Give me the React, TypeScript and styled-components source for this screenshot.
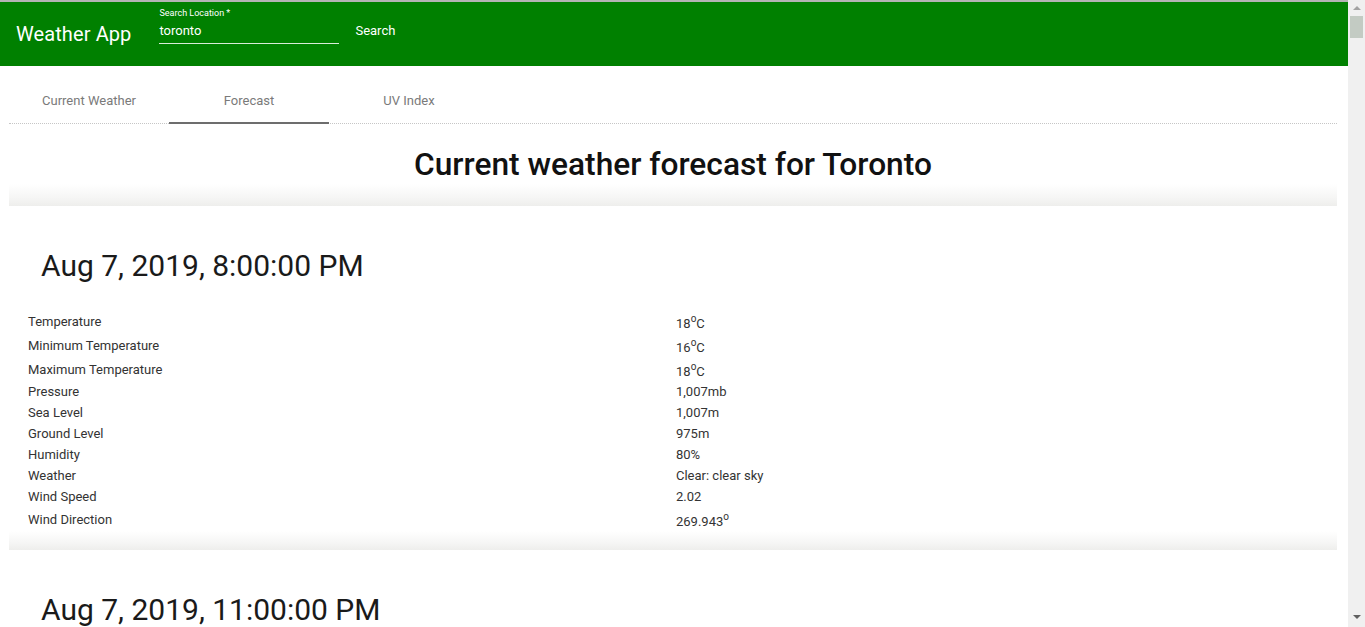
import React, { useState } from 'react';
import styled, { createGlobalStyle } from 'styled-components';

const GlobalStyle = createGlobalStyle`
    body {
        margin: 0 28px 0 9px;
        font-family: Roboto, "Liberation Sans", sans-serif;
        background: #fff;
        color: rgba(0, 0, 0, 0.87);
    }
`
const AppBar = styled.header`
    position: fixed;
    top: 0;
    left: 0;
    right: 17px;
    z-index: 10;
    height: 64px;
    border-top: 2px solid #b4b4b4;
    background-color: #008000;
    display: flex;
    align-items: center;
    padding: 0 16px;
    color: #fff;
`
const Brand = styled.h1`
    margin: 0 30px 0 0;
    font-size: 20px;
    font-weight: 400;
    letter-spacing: 0.1px;
`
const SearchField = styled.label`
    display: flex;
    flex-direction: column;
    width: 180px;
    margin: -18px 0 0 -2px;
    & > span {
        font-size: 9px;
        line-height: 12px;
        margin-top: 1px;
    }
    & > input {
        border: none;
        border-bottom: 1px solid rgba(255, 255, 255, 0.85);
        background: transparent;
        color: #fff;
        font-family: Roboto, "Liberation Sans", sans-serif;
        font-size: 13px;
        padding: 4px 0 5px;
        outline: none;
    }
`
const SearchButton = styled.button`
    background: none;
    border: none;
    color: #fff;
    font-family: Roboto, "Liberation Sans", sans-serif;
    font-size: 13px;
    margin: -8px 0 0 10px;
    padding: 6px 6px;
    cursor: pointer;
`
const ScrollTrack = styled.div`
    position: fixed;
    top: 0;
    right: 0;
    bottom: 0;
    width: 17px;
    background: #f0f0f0;
    z-index: 20;
    display: flex;
    flex-direction: column;
    align-items: center;
    justify-content: space-between;
    padding: 6px 0 8px;
    box-sizing: border-box;
    & > .thumb {
        position: absolute;
        top: 16px;
        left: 2px;
        width: 13px;
        height: 22px;
        background: #c3cbc3;
    }
`
const Arrow = styled.span<{ $down?: boolean }>`
    width: 0;
    height: 0;
    border-left: 4px solid transparent;
    border-right: 4px solid transparent;
    ${p => (p.$down ? 'border-top: 4px solid #606060;' : 'border-bottom: 4px solid #a3a3a3;')}
`
const Main = styled.main`
    padding-top: 66px;
`
const TabBar = styled.nav`
    display: flex;
    border-bottom: 1px dotted #c6c6c6;
`
const Tab = styled.button<{ $active?: boolean }>`
    width: 160px;
    height: 58px;
    padding-top: 14px;
    background: none;
    border: none;
    border-bottom: 2px solid ${p => (p.$active ? '#6d6d6d' : 'transparent')};
    margin-bottom: -1px;
    color: #7a7a7a;
    font-family: Roboto, "Liberation Sans", sans-serif;
    font-size: 13px;
    cursor: pointer;
`
const Title = styled.h2`
    margin: 0;
    padding: 22px 0 0;
    line-height: 38px;
    text-align: center;
    font-size: 31.7px;
    font-weight: 500;
    color: #111;
`
const Shade = styled.div<{ $h: number }>`
    height: ${p => p.$h}px;
    background: linear-gradient(to bottom, #ffffff, #f6f6f5 60%, #eeeeec);
`
const Card = styled.section`
    padding: 42px 0 0;
`
const CardTitle = styled.h3`
    margin: 0 0 25px 32px;
    font-size: 30px;
    line-height: 36px;
    font-weight: 400;
    color: #1a1a1a;
`
const Table = styled.table`
    border-collapse: collapse;
    margin-left: 19px;
    font-size: 13px;
    color: #333;
    & td {
        padding: 0;
        vertical-align: middle;
    }
    & td:first-child {
        width: 648px;
    }
    & sup {
        font-size: 10px;
        line-height: 1;
        vertical-align: 6px;
    }
`
const Row = styled.tr<{ $tall?: boolean }>`
    height: ${p => (p.$tall ? 24 : 21)}px;
    & > td:last-child {
        padding-top: ${p => (p.$tall ? 3 : 0)}px;
    }
`

type Reading = { time: string; temp: number; min: number; max: number; pressure: string; sea: string; ground: string; humidity: string; weather: string; wind: string; dir: string }

const readings: Reading[] = [
    { time: 'Aug 7, 2019, 8:00:00 PM', temp: 18, min: 16, max: 18, pressure: '1,007mb', sea: '1,007m', ground: '975m', humidity: '80%', weather: 'Clear: clear sky', wind: '2.02', dir: '269.943' },
    { time: 'Aug 7, 2019, 11:00:00 PM', temp: 17, min: 16, max: 17, pressure: '1,008mb', sea: '1,008m', ground: '976m', humidity: '84%', weather: 'Clear: clear sky', wind: '1.87', dir: '254.121' },
]

const Deg = () => <sup>o</sup>

const ForecastCard: React.FC<{ r: Reading }> = ({ r }) => (
    <Card>
        <CardTitle>{r.time}</CardTitle>
        <Table>
            <tbody>
                <Row $tall><td>Temperature</td><td>{r.temp}<Deg />C</td></Row>
                <Row $tall><td>Minimum Temperature</td><td>{r.min}<Deg />C</td></Row>
                <Row $tall><td>Maximum Temperature</td><td>{r.max}<Deg />C</td></Row>
                <Row><td>Pressure</td><td>{r.pressure}</td></Row>
                <Row><td>Sea Level</td><td>{r.sea}</td></Row>
                <Row><td>Ground Level</td><td>{r.ground}</td></Row>
                <Row><td>Humidity</td><td>{r.humidity}</td></Row>
                <Row><td>Weather</td><td>{r.weather}</td></Row>
                <Row><td>Wind Speed</td><td>{r.wind}</td></Row>
                <Row $tall><td>Wind Direction</td><td>{r.dir}<Deg /></td></Row>
            </tbody>
        </Table>
    </Card>
)

const App: React.FC = () => {
    const [tab, setTab] = useState(1);
    const [query, setQuery] = useState('toronto');
    const tabs = ['Current Weather', 'Forecast', 'UV Index'];
    return (
        <>
            <GlobalStyle />
            <AppBar>
                <Brand>Weather App</Brand>
                <SearchField>
                    <span>Search Location *</span>
                    <input value={query} onChange={e => setQuery(e.target.value)} />
                </SearchField>
                <SearchButton>Search</SearchButton>
            </AppBar>
            <ScrollTrack>
                <Arrow />
                <div className="thumb" />
                <Arrow $down />
            </ScrollTrack>
            <Main>
                <TabBar>
                    {tabs.map((t, i) => (
                        <Tab key={t} $active={i === tab} onClick={() => setTab(i)}>{t}</Tab>
                    ))}
                </TabBar>
                <Title>Current weather forecast for Toronto</Title>
                <Shade $h={22} />
                {readings.map((r, i) => (
                    <React.Fragment key={r.time}>
                        <ForecastCard r={r} />
                        {i < readings.length - 1 && <Shade $h={19} />}
                    </React.Fragment>
                ))}
            </Main>
        </>
    );
}

export default App;
